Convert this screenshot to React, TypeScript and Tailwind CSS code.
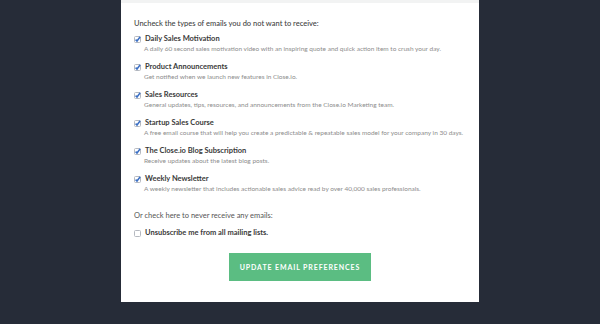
import React from "react";

const items = [
  ["Daily Sales Motivation", "A daily 60 second sales motivation video with an inspiring quote and quick action item to crush your day."],
  ["Product Announcements", "Get notified when we launch new features in Close.io."],
  ["Sales Resources", "General updates, tips, resources, and announcements from the Close.io Marketing team."],
  ["Startup Sales Course", "A free email course that will help you create a predictable & repeatable sales model for your company in 30 days."],
  ["The Close.io Blog Subscription", "Receive updates about the latest blog posts."],
  ["Weekly Newsletter", "A weekly newsletter that includes actionable sales advice read by over 40,000 sales professionals."],
];

function Check({ checked }: { checked: boolean }) {
  return (
    <svg width="7" height="7" viewBox="0 0 7 7" className="shrink-0">
      <rect x="0.5" y="0.5" width="6" height="6" rx="1" fill="#fff" stroke="#b5b9c0" />
      {checked && <path d="M1.6 3.6 L3 5 L6.2 0.8" fill="none" stroke="#3b6fc4" strokeWidth="1.5" />}
    </svg>
  );
}

export default function App() {
  return (
    <div className="w-[600px] h-[324px] bg-[#262c38] flex justify-center" style={{ fontFamily: "Lato, 'Open Sans', sans-serif" }}>
      <div className="w-[358px] h-[302px] bg-white flex flex-col">
        <div className="h-[3px] bg-[#f2f3f3]" />
        <div className="pl-[13px] pt-[16px]">
          <div className="text-[7.5px] leading-[10px] text-[#444] font-medium">Uncheck the types of emails you do not want to receive:</div>
          <div className="mt-[5px] flex flex-col gap-[8px]">
            {items.map(([t, d]) => (
              <div key={t} className="flex flex-col">
                <div className="flex items-center gap-[3px] h-[10px]">
                  <Check checked />
                  <span className="text-[7.5px] font-bold text-[#3a3a3a] leading-[10px] ml-[1px]">{t}</span>
                </div>
                <div className="pl-[10px] text-[6.5px] leading-[10px] text-[#8d8d8d]">{d}</div>
              </div>
            ))}
          </div>
          <div className="mt-[17px] text-[7.5px] leading-[10px] text-[#555]">Or check here to never receive any emails:</div>
          <div className="mt-[7px] flex items-center gap-[4px] h-[10px]">
            <Check checked={false} />
            <span className="text-[7.5px] font-bold text-[#3a3a3a] leading-[10px]">Unsubscribe me from all mailing lists.</span>
          </div>
        </div>
        <div className="flex justify-center mt-[15px]">
          <button className="w-[142px] h-[28px] bg-[#5bbd82] text-white text-[7px] font-bold tracking-[0.9px] uppercase">Update Email Preferences</button>
        </div>
      </div>
    </div>
  );
}
